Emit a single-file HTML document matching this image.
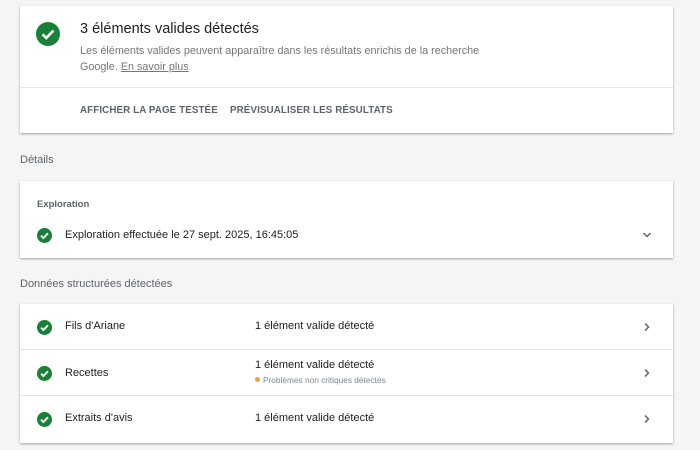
<!DOCTYPE html>
<html><head><meta charset="utf-8"><style>
*{margin:0;padding:0;box-sizing:border-box}
body{width:700px;height:450px;background:#f5f5f5;font-family:"Liberation Sans",Arial,sans-serif;color:#202124;position:relative;overflow:hidden}
.card{position:absolute;left:20px;width:653px;background:#fff;box-shadow:0 1px 2px rgba(0,0,0,.25),0 1px 3px rgba(0,0,0,.1)}
.abs{position:absolute;white-space:nowrap}
.chk{position:absolute;width:15px;height:15px}
.lbl{color:#5f6368;font-size:11px}
.row{position:absolute;left:0;right:0;height:46px;border-bottom:1px solid #e3e3e3}
.t{font-size:11px;color:#202124}
</style></head><body>
<div class="card" style="top:6px;height:127px">
  <svg class="chk" style="left:16px;top:16px;width:24px;height:24px" viewBox="0 0 24 24"><circle cx="12" cy="12" r="12" fill="#188038"/><path d="M6.5 12.3l3.7 3.7 7.3-7.5" stroke="#fff" stroke-width="2.6" fill="none"/></svg>
  <div class="abs" style="left:60px;top:15px;font-size:14.5px;color:#202124">3 éléments valides détectés</div>
  <div class="abs" style="left:60px;top:37px;font-size:10.8px;color:#777;line-height:16px">Les éléments valides peuvent apparaître dans les résultats enrichis de la recherche<br>Google. <span style="text-decoration:underline">En savoir plus</span></div>
  <div class="abs" style="left:0;right:0;top:81px;border-top:1px solid #e3e3e3"></div>
  <div class="abs" style="left:60px;top:99px;font-size:9.8px;font-weight:bold;color:#5f6368;letter-spacing:.1px">AFFICHER LA PAGE TESTÉE</div>
  <div class="abs" style="left:210px;top:99px;font-size:9.8px;font-weight:bold;color:#5f6368;letter-spacing:.1px">PRÉVISUALISER LES RÉSULTATS</div>
</div>
<div class="abs lbl" style="left:20px;top:154px">Détails</div>
<div class="card" style="top:181px;height:77px">
  <div class="abs" style="left:17px;top:18px;font-size:9.5px;font-weight:bold;color:#5f6368">Exploration</div>
  <svg class="chk" style="left:17px;top:47px" viewBox="0 0 24 24"><circle cx="12" cy="12" r="12" fill="#188038"/><path d="M6.5 12.3l3.7 3.7 7.3-7.5" stroke="#fff" stroke-width="3" fill="none"/></svg>
  <div class="abs t" style="left:45px;top:48px">Exploration effectuée le 27 sept. 2025, 16:45:05</div>
  <svg class="abs" style="left:621px;top:49px" width="12" height="10" viewBox="0 0 12 10"><path d="M2.5 3l3.5 3.5 3.5-3.5" stroke="#5f6368" stroke-width="1.5" fill="none"/></svg>
</div>
<div class="abs lbl" style="left:20px;top:278px">Données structurées détectées</div>
<div class="card" style="top:304px;height:139px">
  <div class="row" style="top:0">
    <svg class="chk" style="left:17px;top:16px" viewBox="0 0 24 24"><circle cx="12" cy="12" r="12" fill="#188038"/><path d="M6.5 12.3l3.7 3.7 7.3-7.5" stroke="#fff" stroke-width="3" fill="none"/></svg>
    <div class="abs t" style="left:45px;top:16px">Fils d'Ariane</div>
    <div class="abs t" style="left:235px;top:16px">1 élément valide détecté</div>
    <svg class="abs" style="left:622px;top:17px" width="10" height="12" viewBox="0 0 10 12"><path d="M3 2.5l3.5 3.5-3.5 3.5" stroke="#5f6368" stroke-width="1.5" fill="none"/></svg>
  </div>
  <div class="row" style="top:46px">
    <svg class="chk" style="left:17px;top:16px" viewBox="0 0 24 24"><circle cx="12" cy="12" r="12" fill="#188038"/><path d="M6.5 12.3l3.7 3.7 7.3-7.5" stroke="#fff" stroke-width="3" fill="none"/></svg>
    <div class="abs t" style="left:45px;top:17px">Recettes</div>
    <div class="abs t" style="left:235px;top:9px">1 élément valide détecté</div>
    <div class="abs" style="left:235px;top:25px;font-size:8.3px;color:#80868b"><span style="display:inline-block;width:5px;height:5px;border-radius:50%;background:#e8a33d;margin-right:3px;vertical-align:1px"></span>Problèmes non critiques détectés</div>
    <svg class="abs" style="left:622px;top:17px" width="10" height="12" viewBox="0 0 10 12"><path d="M3 2.5l3.5 3.5-3.5 3.5" stroke="#5f6368" stroke-width="1.5" fill="none"/></svg>
  </div>
  <div class="row" style="top:92px;border-bottom:none">
    <svg class="chk" style="left:17px;top:16px" viewBox="0 0 24 24"><circle cx="12" cy="12" r="12" fill="#188038"/><path d="M6.5 12.3l3.7 3.7 7.3-7.5" stroke="#fff" stroke-width="3" fill="none"/></svg>
    <div class="abs t" style="left:45px;top:16px">Extraits d'avis</div>
    <div class="abs t" style="left:235px;top:16px">1 élément valide détecté</div>
    <svg class="abs" style="left:622px;top:17px" width="10" height="12" viewBox="0 0 10 12"><path d="M3 2.5l3.5 3.5-3.5 3.5" stroke="#5f6368" stroke-width="1.5" fill="none"/></svg>
  </div>
</div>
</body></html>
